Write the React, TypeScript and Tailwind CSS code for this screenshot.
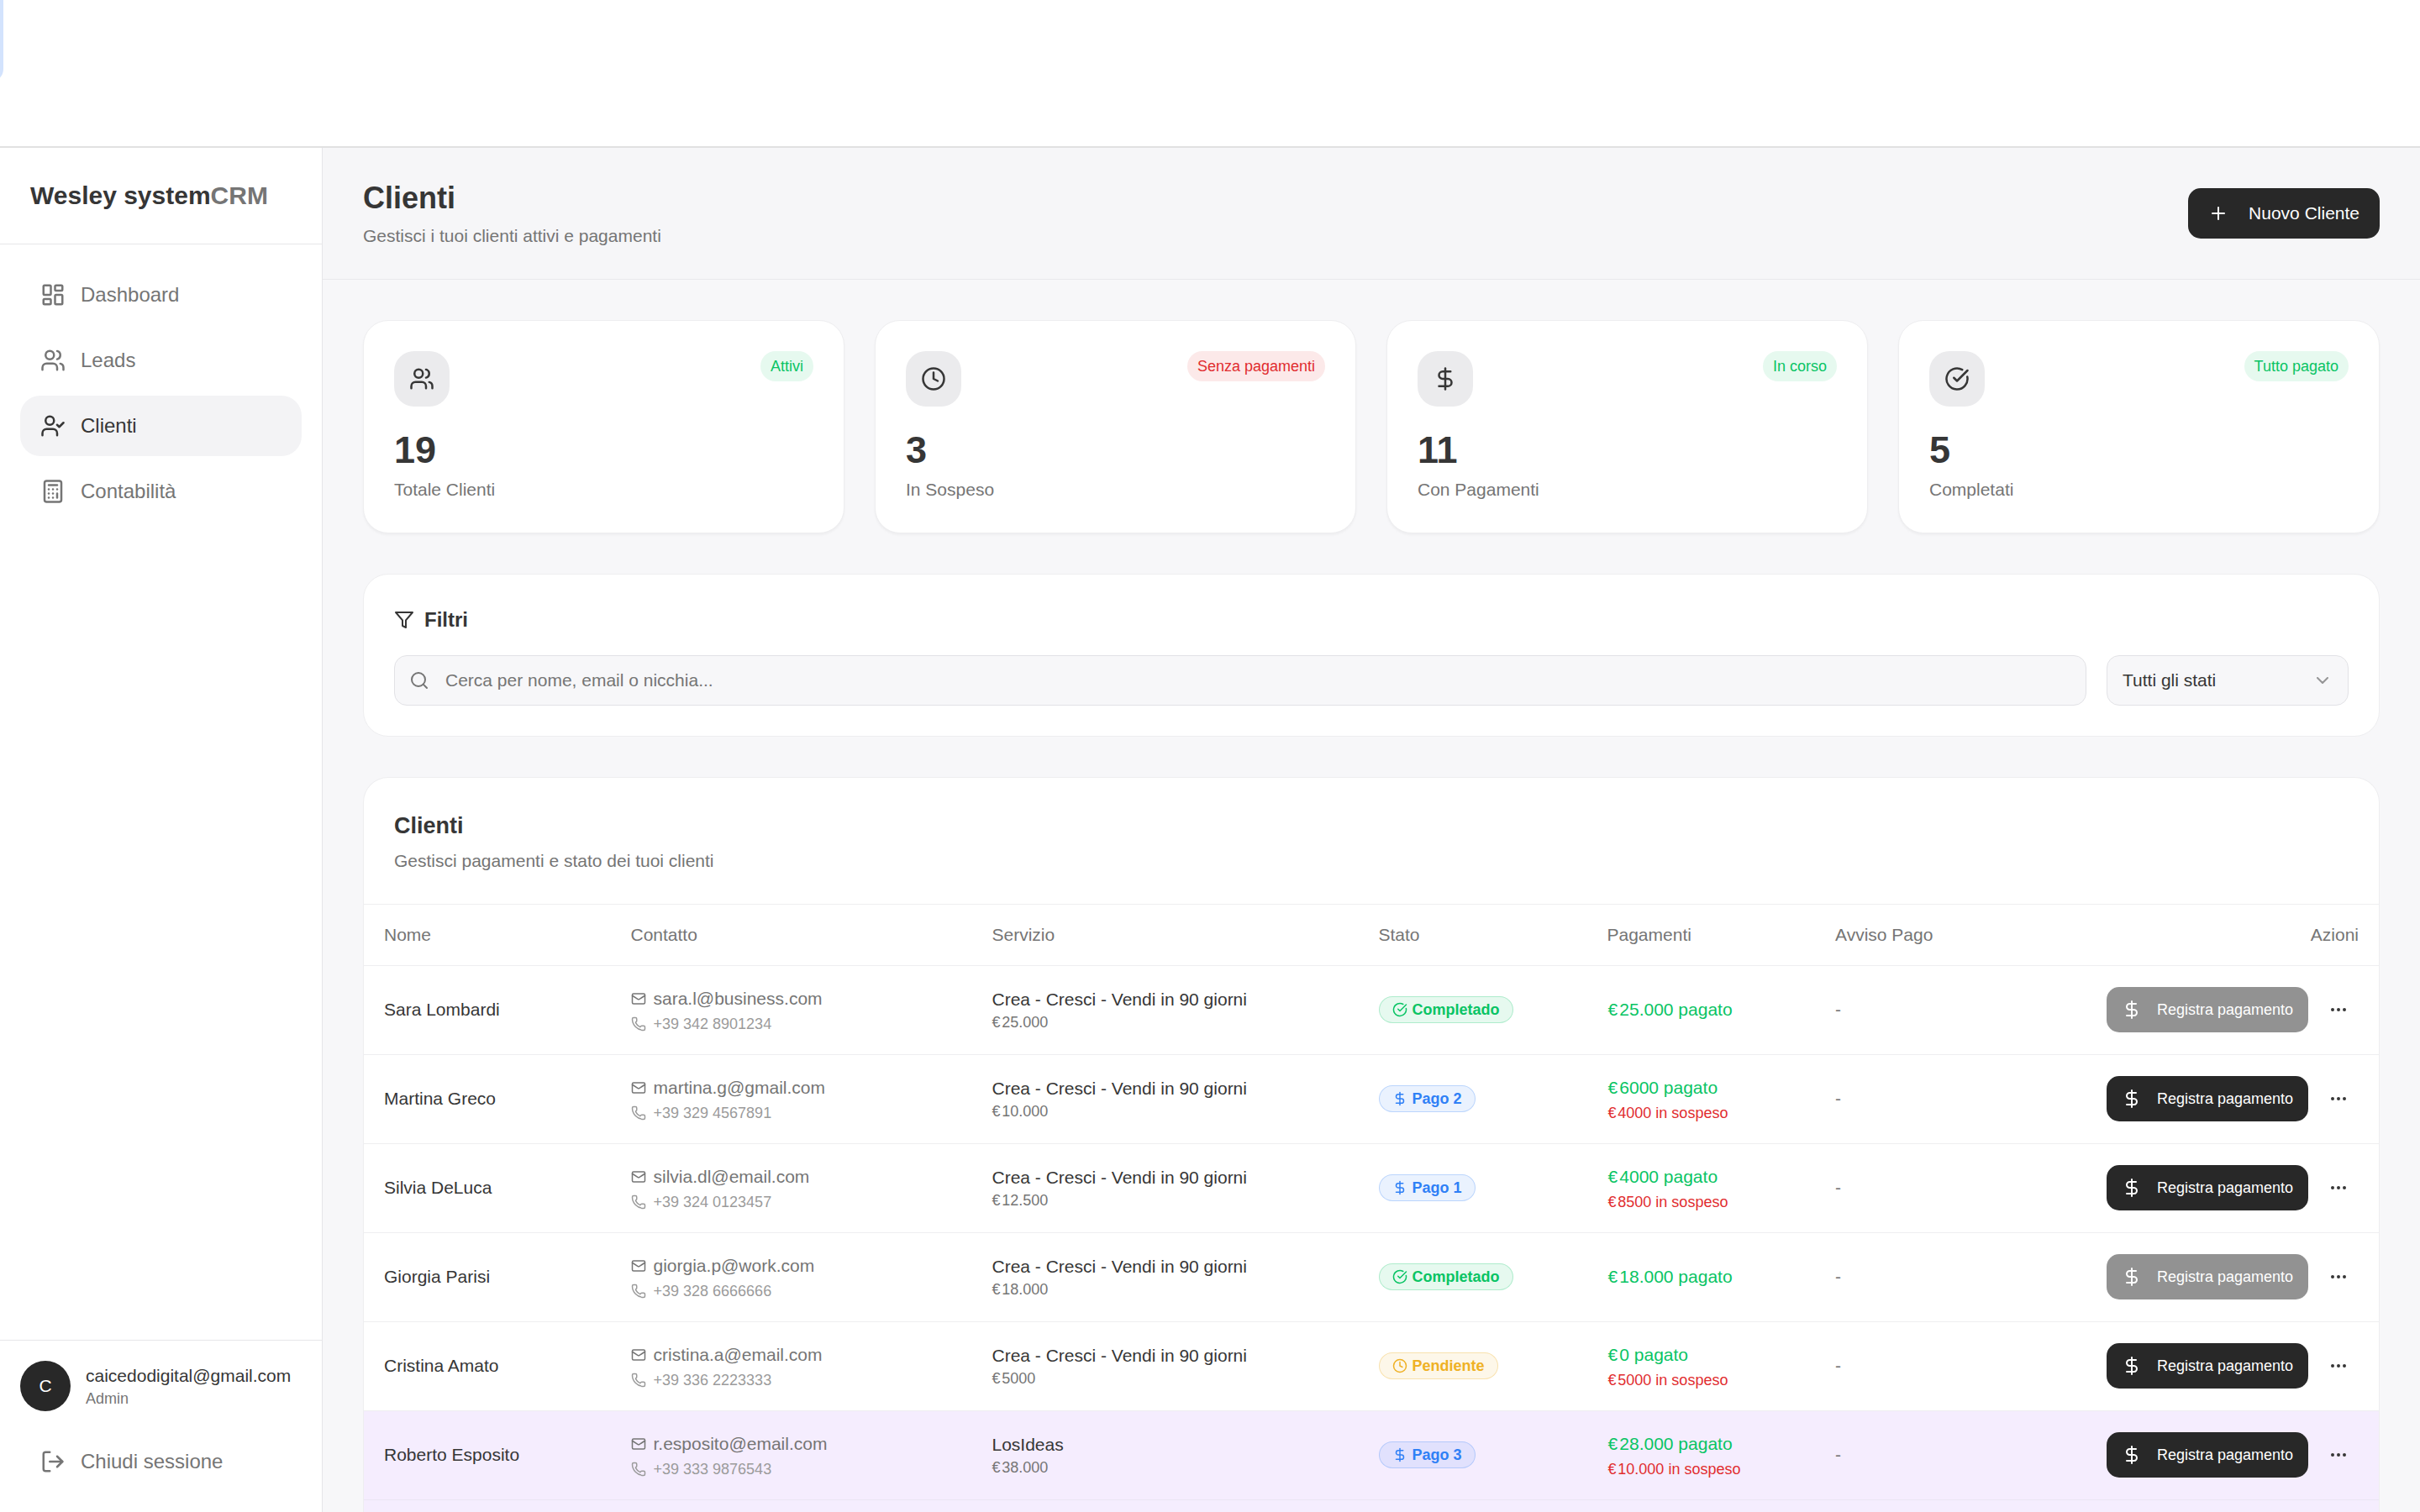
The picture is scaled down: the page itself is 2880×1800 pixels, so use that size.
import type { ReactNode } from "react";
import {
  Calculator,
  ChevronDown,
  CircleCheckBig,
  Clock,
  DollarSign,
  LayoutDashboard,
  LogOut,
  Mail,
  Ellipsis,
  Phone,
  Plus,
  Search,
  UserCheck,
  Users,
  type LucideIcon,
} from "lucide-react";

const navItems: { icon: LucideIcon; label: string; active?: boolean }[] = [
  { icon: LayoutDashboard, label: "Dashboard" },
  { icon: Users, label: "Leads" },
  { icon: UserCheck, label: "Clienti", active: true },
  { icon: Calculator, label: "Contabilità" },
];

const stats: { icon: LucideIcon; badge: string; tone: "green" | "red"; value: string; label: string }[] = [
  { icon: Users, badge: "Attivi", tone: "green", value: "19", label: "Totale Clienti" },
  { icon: Clock, badge: "Senza pagamenti", tone: "red", value: "3", label: "In Sospeso" },
  { icon: DollarSign, badge: "In corso", tone: "green", value: "11", label: "Con Pagamenti" },
  { icon: CircleCheckBig, badge: "Tutto pagato", tone: "green", value: "5", label: "Completati" },
];

type Status = "done" | "partial" | "pending";

interface Client {
  name: string;
  email: string;
  phone: string;
  service: string;
  price: string;
  status: Status;
  statusLabel: string;
  paid: string;
  due?: string;
  highlighted?: boolean;
}

const course = "Crea - Cresci - Vendi in 90 giorni";

const clients: Client[] = [
  { name: "Sara Lombardi", email: "sara.l@business.com", phone: "+39 342 8901234", service: course, price: "25.000", status: "done", statusLabel: "Completado", paid: "25.000" },
  { name: "Martina Greco", email: "martina.g@gmail.com", phone: "+39 329 4567891", service: course, price: "10.000", status: "partial", statusLabel: "Pago 2", paid: "6000", due: "4000" },
  { name: "Silvia DeLuca", email: "silvia.dl@email.com", phone: "+39 324 0123457", service: course, price: "12.500", status: "partial", statusLabel: "Pago 1", paid: "4000", due: "8500" },
  { name: "Giorgia Parisi", email: "giorgia.p@work.com", phone: "+39 328 6666666", service: course, price: "18.000", status: "done", statusLabel: "Completado", paid: "18.000" },
  { name: "Cristina Amato", email: "cristina.a@email.com", phone: "+39 336 2223333", service: course, price: "5000", status: "pending", statusLabel: "Pendiente", paid: "0", due: "5000" },
  { name: "Roberto Esposito", email: "r.esposito@email.com", phone: "+39 333 9876543", service: "LosIdeas", price: "38.000", status: "partial", statusLabel: "Pago 3", paid: "28.000", due: "10.000", highlighted: true },
];

const statusStyles: Record<Status, { icon: LucideIcon; className: string }> = {
  done: { icon: CircleCheckBig, className: "border-[#09c464]/25 bg-[#09c464]/10 text-[#09c464]" },
  partial: { icon: DollarSign, className: "border-[#2f80f6]/25 bg-[#2f80f6]/10 text-[#2f80f6]" },
  pending: { icon: Clock, className: "border-[#efb125]/30 bg-[#efb125]/10 text-[#efb125]" },
};

const gridCols = "grid grid-cols-[293.5px_430px_460px_272px_271.5px_1fr]";

function FunnelIcon() {
  return (
    <svg className="size-6 shrink-0" viewBox="0 0 24 24" fill="none" stroke="currentColor" strokeWidth="2" strokeLinecap="round" strokeLinejoin="round">
      <polygon points="22 3 2 3 10 12.46 10 19 14 21 14 12.46 22 3" />
    </svg>
  );
}

function Euro({ children }: { children: ReactNode }) {
  return (
    <>
      <span className="tracking-[0.1em]">€</span>
      {children}
    </>
  );
}

function Sidebar() {
  return (
    <aside className="flex w-96 shrink-0 flex-col border-r border-[#e6e6e9] bg-white">
      <div className="border-b border-[#e6e6e9] p-9 text-[30px] leading-[42px] font-bold whitespace-nowrap">
        Wesley system<span className="text-[#757575]">CRM</span>
      </div>
      <nav className="flex flex-1 flex-col gap-1.5 p-6">
        {navItems.map(({ icon: Icon, label, active }) => (
          <a
            key={label}
            className={
              active
                ? "flex h-18 items-center gap-[18px] rounded-3xl bg-[#f3f3f5] px-6 text-2xl text-[#363636]"
                : "flex h-18 items-center gap-[18px] rounded-3xl px-6 text-2xl text-[#757575]"
            }
          >
            <Icon className="size-[30px]" />
            {label}
          </a>
        ))}
      </nav>
      <div className="border-t border-[#e6e6e9] p-6">
        <div className="flex items-center gap-[18px]">
          <div className="flex size-15 shrink-0 items-center justify-center rounded-full bg-[#282828] text-[21px] text-white">C</div>
          <div className="whitespace-nowrap">
            <div className="text-[21px] leading-[30px]">caicedodigital@gmail.com</div>
            <div className="text-lg leading-6 text-[#757575]">Admin</div>
          </div>
        </div>
        <a className="mt-6 flex h-18 items-center gap-[18px] px-6 text-2xl text-[#757575]">
          <LogOut className="size-[30px]" />
          Chiudi sessione
        </a>
      </div>
    </aside>
  );
}

function StatCard({ icon: Icon, badge, tone, value, label }: (typeof stats)[number]) {
  return (
    <div className="rounded-[30px] border border-[#eeeef0] bg-white p-9 shadow-[0_2px_3px_rgba(0,0,0,0.04)]">
      <div className="flex items-start justify-between">
        <div className="flex size-[66px] items-center justify-center rounded-3xl bg-[#ebebed]">
          <Icon className="size-[30px]" />
        </div>
        <span
          className={
            tone === "green"
              ? "rounded-full bg-[#e6f9ef] px-3 py-1.5 text-lg leading-6 text-[#09c464]"
              : "rounded-full bg-[#fce9e9] px-3 py-1.5 text-lg leading-6 text-[#e12d2f]"
          }
        >
          {badge}
        </span>
      </div>
      <div className="mt-[25px] text-[45px] leading-[54px] font-bold">{value}</div>
      <div className="mt-[5px] text-[21px] leading-[30px] text-[#757575]">{label}</div>
    </div>
  );
}

function Filters() {
  return (
    <section className="mt-12 rounded-[30px] border border-[#eeeef0] bg-white p-9">
      <h3 className="flex items-center gap-3 text-2xl leading-9 font-bold">
        <FunnelIcon />
        Filtri
      </h3>
      <div className="mt-6 flex gap-6 text-[21px]">
        <div className="flex h-15 flex-1 items-center gap-[19px] rounded-[15px] border border-[#e2e2e6] bg-[#f7f7f9] px-[17px] text-[#757575]">
          <Search className="size-6" />
          Cerca per nome, email o nicchia...
        </div>
        <div className="flex h-15 w-72 items-center justify-between rounded-[15px] border border-[#e2e2e6] bg-[#f7f7f9] px-[18px]">
          Tutti gli stati
          <ChevronDown className="size-6 opacity-50" />
        </div>
      </div>
    </section>
  );
}

function Cell({ children }: { children: ReactNode }) {
  return <div className="flex flex-col items-start justify-center px-6 whitespace-nowrap">{children}</div>;
}

function ClientRow({ client }: { client: Client }) {
  const { icon: StatusIcon, className } = statusStyles[client.status];
  const disabled = client.status === "done";
  return (
    <div className={client.highlighted ? `${gridCols} h-[106px] border-b border-[#ebe5f3] bg-[#f5edfe] pb-px` : `${gridCols} h-[106px] border-b border-[#eeeef0] pb-px`}>
      <Cell>{client.name}</Cell>
      <Cell>
        <div className="flex items-center gap-[9px] leading-[30px] text-[#757575]">
          <Mail className="size-[18px]" />
          {client.email}
        </div>
        <div className="mt-[3px] flex items-center gap-[9px] text-lg leading-6 text-[#9b9b9b]">
          <Phone className="size-[18px]" />
          {client.phone}
        </div>
      </Cell>
      <Cell>
        <div className="leading-[30px]">{client.service}</div>
        <div className="text-lg leading-6 text-[#757575]">
          <Euro>{client.price}</Euro>
        </div>
      </Cell>
      <Cell>
        <span className={`flex h-8 items-center gap-1.5 rounded-full border px-[15px] text-lg leading-6 font-bold ${className}`}>
          <StatusIcon className="size-[18px]" />
          {client.statusLabel}
        </span>
      </Cell>
      <Cell>
        <div className="pl-px leading-[30px] text-[#09c464]">
          <Euro>{client.paid} pagato</Euro>
        </div>
        {client.due && (
          <div className="mt-[3px] pl-px text-lg leading-6 text-[#e12d2f]">
            <Euro>{client.due} in sospeso</Euro>
          </div>
        )}
      </Cell>
      <div className="flex items-center justify-between px-6">
        <span className="text-[#757575]">-</span>
        <div className="flex items-center gap-3">
          <button
            className={
              disabled
                ? "flex h-[54px] items-center gap-[18px] rounded-[15px] bg-[#282828] px-[18px] text-lg text-white opacity-50"
                : "flex h-[54px] items-center gap-[18px] rounded-[15px] bg-[#282828] px-[18px] text-lg text-white"
            }
          >
            <DollarSign className="size-6" />
            Registra pagamento
          </button>
          <button className="flex size-12 items-center justify-center">
            <Ellipsis className="size-6" />
          </button>
        </div>
      </div>
    </div>
  );
}

function ClientTable() {
  return (
    <section className="mt-12 overflow-hidden rounded-t-[30px] border border-b-0 border-[#eeeef0] bg-white text-[21px]">
      <div className="border-b border-[#eeeef0] p-9">
        <h2 className="text-[27px] leading-[42px] font-bold">Clienti</h2>
        <p className="mt-1.5 leading-[30px] text-[#757575]">Gestisci pagamenti e stato dei tuoi clienti</p>
      </div>
      <div className={`${gridCols} h-[73px] border-b border-[#eeeef0] text-[#757575]`}>
        <Cell>Nome</Cell>
        <Cell>Contatto</Cell>
        <Cell>Servizio</Cell>
        <Cell>Stato</Cell>
        <Cell>Pagamenti</Cell>
        <div className="flex items-center justify-between px-6">
          <span>Avviso Pago</span>
          <span>Azioni</span>
        </div>
      </div>
      {clients.map((client) => (
        <ClientRow key={client.name} client={client} />
      ))}
      <div className="h-24 bg-[#f5edfe]" />
    </section>
  );
}

export default function App() {
  return (
    <div className="relative flex h-[1800px] w-[2880px] flex-col overflow-hidden bg-white font-['Liberation_Sans',Arial,sans-serif] text-[#363636]">
      <div className="absolute top-0 -left-5 h-[98px] w-6 rounded-br-2xl bg-[#d3e3fd]" />
      <div className="h-44 shrink-0 border-b-2 border-[#e1e1e1]" />
      <div className="flex min-h-0 flex-1">
        <Sidebar />
        <main className="flex min-w-0 flex-1 flex-col bg-[#f7f7f9]">
          <header className="flex shrink-0 items-center justify-between border-b border-[#e9e9ec] bg-[#f6f6f8] px-12 py-9">
            <div>
              <h1 className="text-4xl leading-[48px] font-bold">Clienti</h1>
              <p className="mt-1.5 text-[21px] leading-[30px] text-[#757575]">Gestisci i tuoi clienti attivi e pagamenti</p>
            </div>
            <button className="flex h-15 items-center gap-6 rounded-[15px] bg-[#282828] px-6 text-[21px] text-white">
              <Plus className="size-6" />
              Nuovo Cliente
            </button>
          </header>
          <div className="min-h-0 flex-1 overflow-hidden px-12 pt-12">
            <div className="grid grid-cols-4 gap-9">
              {stats.map((stat) => (
                <StatCard key={stat.label} {...stat} />
              ))}
            </div>
            <Filters />
            <ClientTable />
          </div>
        </main>
      </div>
    </div>
  );
}
